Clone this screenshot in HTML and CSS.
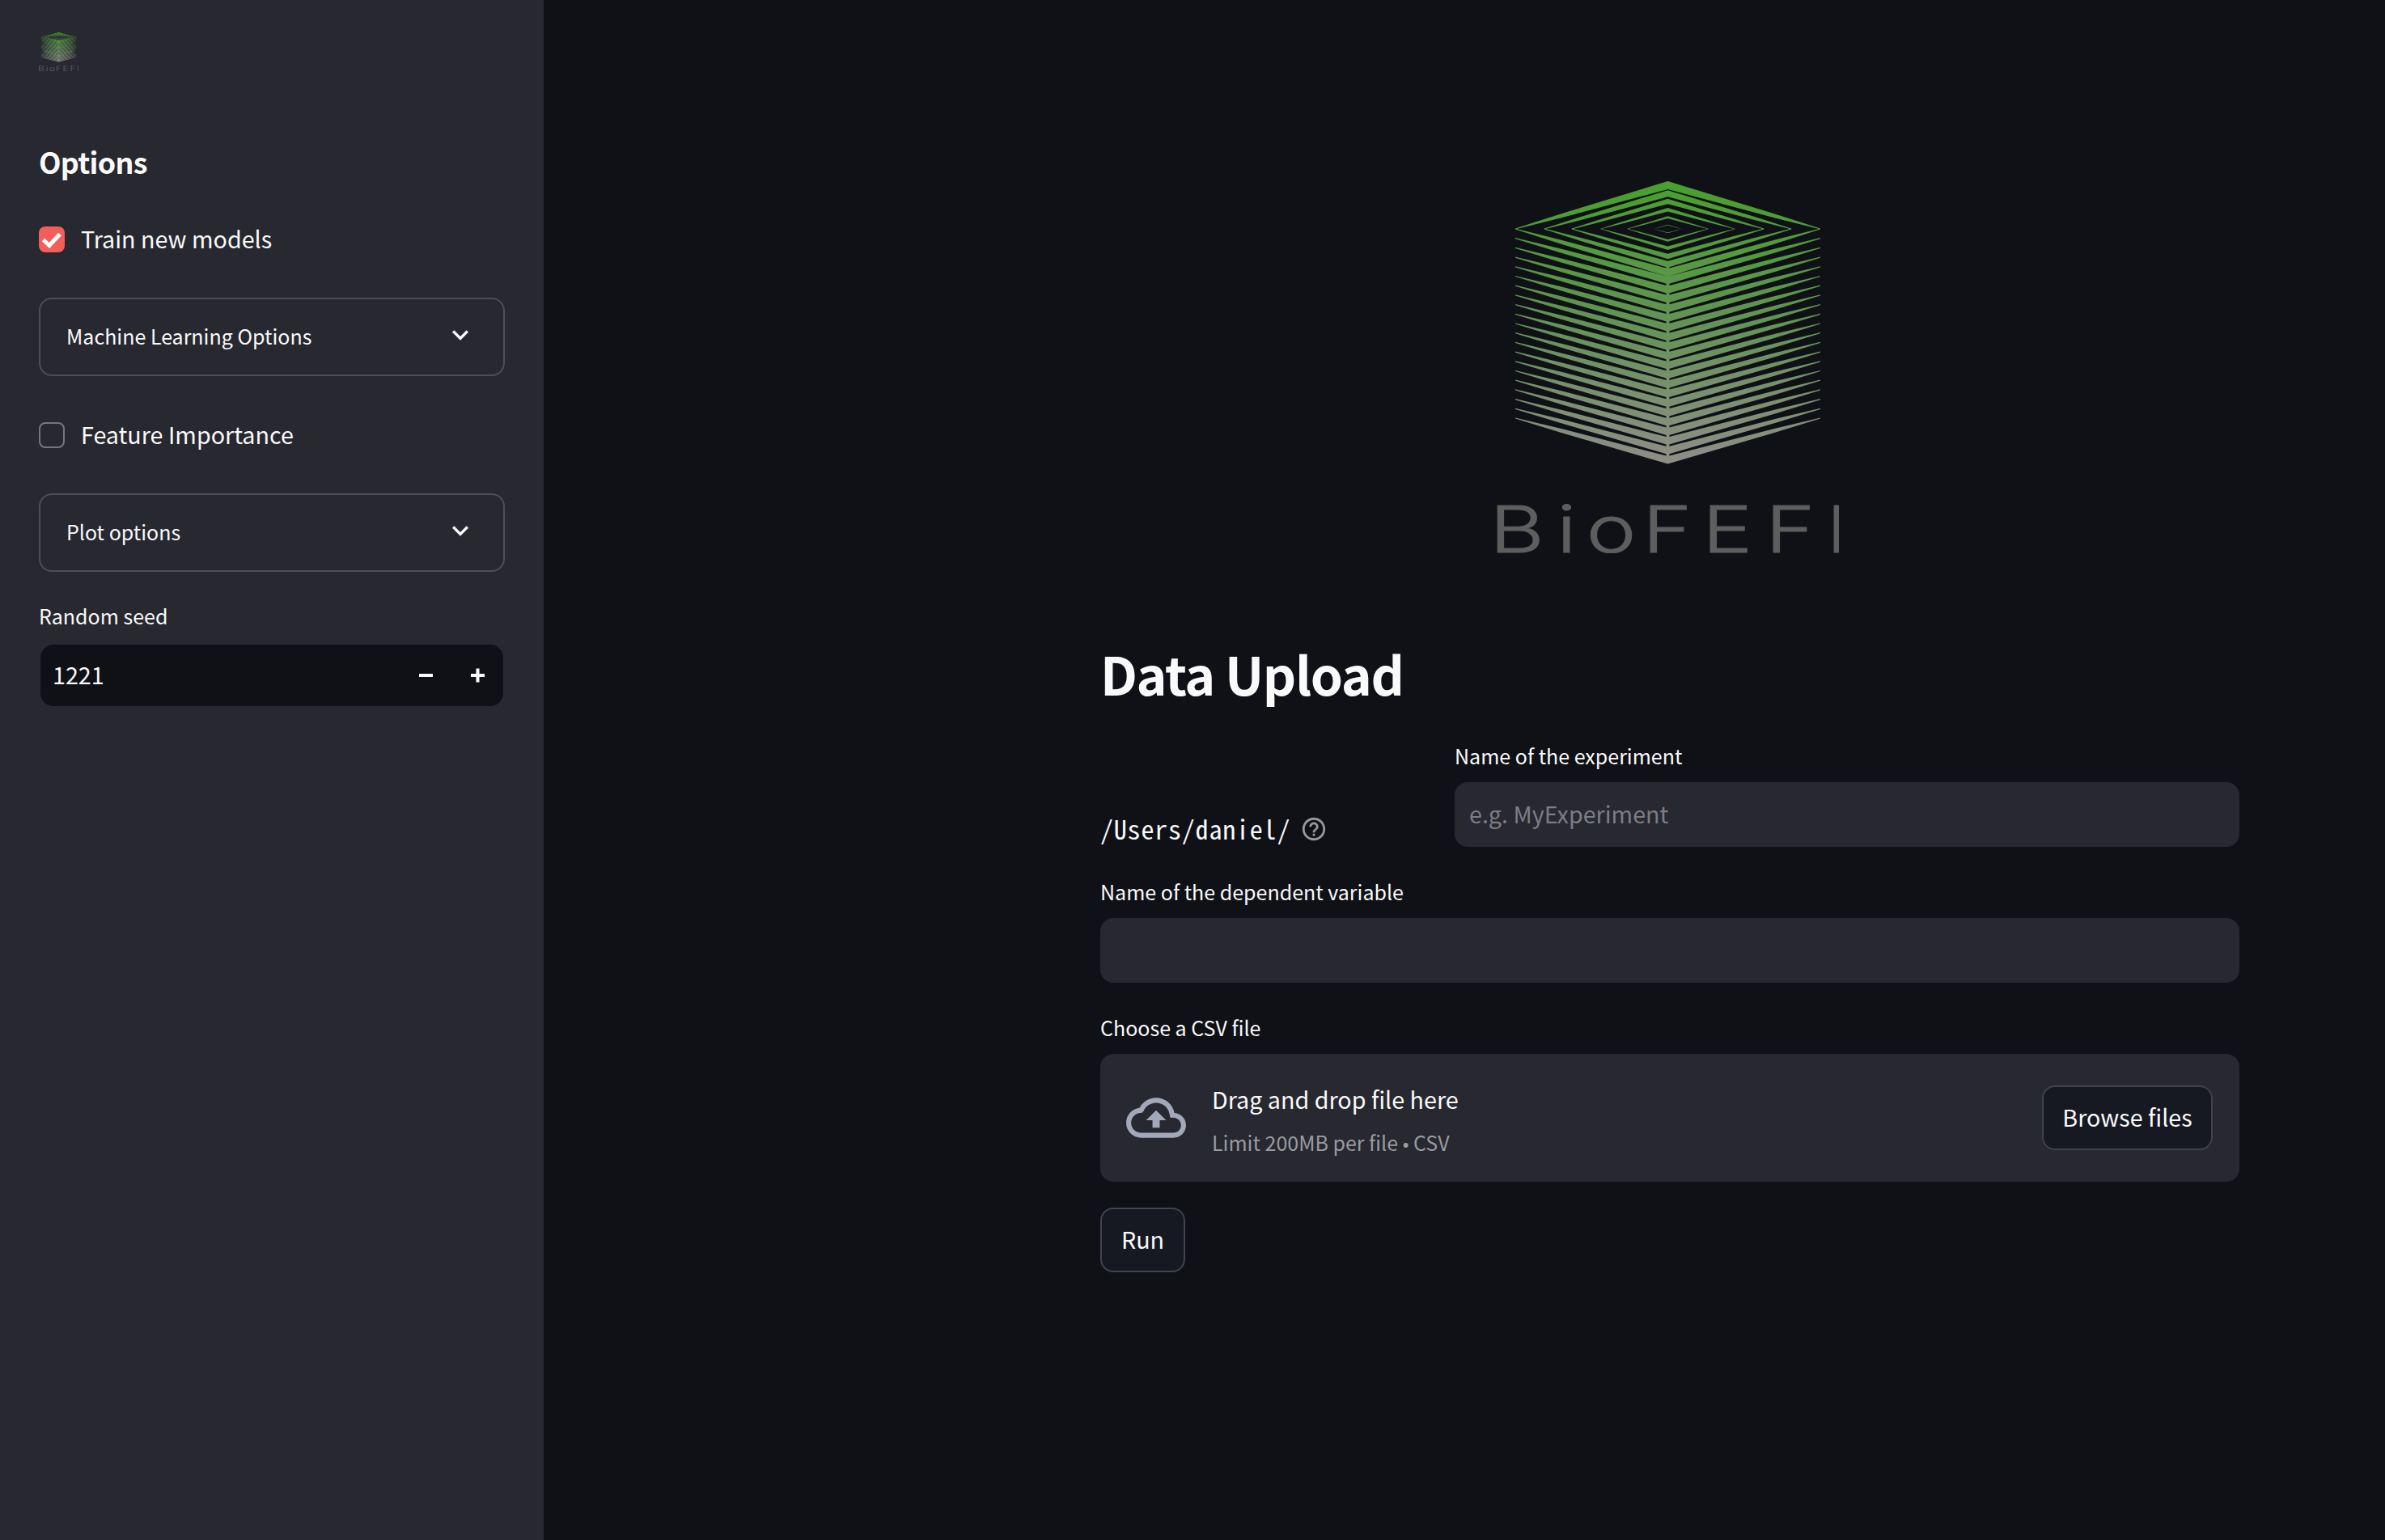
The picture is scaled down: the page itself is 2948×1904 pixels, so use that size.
FILE: index.html
```html
<!DOCTYPE html>
<html lang="en">
  <head>
    <meta charset="UTF-8" />
    <meta name="viewport" content="width=device-width, initial-scale=1.0" />
    <title>BioFEFI</title>
    <link rel="stylesheet" href="styles.css">
  </head>
  <body>
    <aside class="sidebar">
      <svg class="side-logo" viewBox="0 0 424 460" preserveAspectRatio="none"><use href="#logo-mark" /></svg>
      <h2 class="side-title">Options</h2>

      <div class="check check-first">
        <span class="check-box checked">
          <svg viewBox="0 0 32 32"><path d="M5.5 16.5l7.5 7L26 9.5" /></svg>
        </span>
        <span class="check-text">Train new models</span>
      </div>
      <div class="expander">
        <span class="expander-text">Machine Learning Options</span>
        <svg class="chevron" viewBox="0 0 24 24"><path d="M16.59 8.59 12 13.17 7.41 8.59 6 10l6 6 6-6z" /></svg>
      </div>

      <div class="check check-second">
        <span class="check-box"></span>
        <span class="check-text">Feature Importance</span>
      </div>
      <div class="expander">
        <span class="expander-text">Plot options</span>
        <svg class="chevron" viewBox="0 0 24 24"><path d="M16.59 8.59 12 13.17 7.41 8.59 6 10l6 6 6-6z" /></svg>
      </div>

      <div class="label seed-label">Random seed</div>
      <div class="number-input">
        <span class="number-value">1221</span>
        <svg class="step" viewBox="0 0 18 18"><path d="M0 9h17" /></svg>
        <svg class="step" viewBox="0 0 18 18"><path d="M0 9h17M8.5 .5v17" /></svg>
      </div>
    </aside>

    <main class="main">
      <svg class="main-logo" viewBox="0 0 424 460">
        <defs>
          <linearGradient id="cube-fade" gradientUnits="userSpaceOnUse" x1="0" y1="0" x2="0" y2="348">
            <stop offset="0" stop-color="#47a02c" />
            <stop offset="0.45" stop-color="#5f9450" />
            <stop offset="1" stop-color="#8f8d88" />
          </linearGradient>
          <g id="ring">
            <polygon points="24,58.4 80,40.5 212.5,0 345,40.5 401,58.4 401,59.6 345,45.5 212.5,10 80,45.5 24,59.6" />
            <polygon points="24,58.4 80,72.5 212.5,108 345,72.5 401,58.4 401,59.6 345,77.5 212.5,118 80,77.5 24,59.6" />
          </g>
          <polygon id="band" points="24,58.4 80,71.8 212.5,106 345,71.8 401,58.4 401,59.6 345,76.8 212.5,115.5 80,76.8 24,59.6" />
          <mask id="cube-lines" maskUnits="userSpaceOnUse" x="0" y="0" width="424" height="360">
            <g fill="#fff">
              <use href="#ring" />
              <use href="#ring" transform="translate(212.5 59) scale(.81) translate(-212.5 -59)" />
              <use href="#ring" transform="translate(212.5 59) scale(.63) translate(-212.5 -59)" />
              <use href="#ring" transform="translate(212.5 59) scale(.44) translate(-212.5 -59)" />
              <use href="#ring" transform="translate(212.5 59) scale(.265) translate(-212.5 -59)" />
              <use href="#ring" transform="translate(212.5 59) scale(.09) translate(-212.5 -59)" />
              <use href="#band" y="11.7" />
              <use href="#band" y="23.4" />
              <use href="#band" y="35.1" />
              <use href="#band" y="46.8" />
              <use href="#band" y="58.5" />
              <use href="#band" y="70.2" />
              <use href="#band" y="81.9" />
              <use href="#band" y="93.6" />
              <use href="#band" y="105.3" />
              <use href="#band" y="117" />
              <use href="#band" y="128.7" />
              <use href="#band" y="140.4" />
              <use href="#band" y="152.1" />
              <use href="#band" y="163.8" />
              <use href="#band" y="175.5" />
              <use href="#band" y="187.2" />
              <use href="#band" y="198.9" />
              <use href="#band" y="210.6" />
              <use href="#band" y="222.3" />
              <use href="#band" y="234" />
              <rect x="210.5" y="100" width="4" height="247" />
            </g>
          </mask>
          <symbol id="logo-mark" viewBox="0 0 424 460" preserveAspectRatio="none">
            <rect width="424" height="360" fill="url(#cube-fade)" mask="url(#cube-lines)" />
            <text class="logo-word" y="459" transform="scale(1.3 1)" x="-6 57.8 86 139.4 196.3 256.3 314">BioFEFI</text>
          </symbol>
        </defs>
        <use href="#logo-mark" />
      </svg>

      <h1 class="page-title">Data Upload</h1>

      <div class="first-row">
        <div class="path-cell">
          <span class="path">/Users/daniel/</span>
          <svg class="help" viewBox="0 0 24 24"><path d="M11 18h2v-2h-2v2zm1-16C6.48 2 2 6.48 2 12s4.48 10 10 10 10-4.48 10-10S17.52 2 12 2zm0 18c-4.41 0-8-3.59-8-8s3.59-8 8-8 8 3.59 8 8-3.59 8-8 8zm0-14c-2.21 0-4 1.79-4 4h2c0-1.1.9-2 2-2s2 .9 2 2c0 2-3 1.75-3 5h2c0-2.25 3-2.5 3-5 0-2.21-1.79-4-4-4z" /></svg>
        </div>
        <div>
          <div class="label">Name of the experiment</div>
          <div class="text-input placeholder">e.g. MyExperiment</div>
        </div>
      </div>

      <div class="field">
        <div class="label">Name of the dependent variable</div>
        <div class="text-input"></div>
      </div>

      <div class="field">
        <div class="label">Choose a CSV file</div>
        <div class="dropzone">
          <svg class="cloud" viewBox="0 0 24 24"><path d="M19.35 10.04C18.67 6.59 15.64 4 12 4 9.11 4 6.6 5.64 5.35 8.04 2.34 8.36 0 10.91 0 14c0 3.31 2.69 6 6 6h13c2.76 0 5-2.24 5-5 0-2.64-2.05-4.78-4.65-4.96zM19 18H6c-2.21 0-4-1.79-4-4 0-2.05 1.53-3.76 3.56-3.97l1.07-.11.5-.95C8.08 7.14 9.94 6 12 6c2.62 0 4.88 1.86 5.39 4.43l.3 1.5 1.53.11c1.56.1 2.78 1.41 2.78 2.96 0 1.65-1.35 3-3 3zM8 13h2.55v3h2.9v-3H16l-4-4z" /></svg>
          <div class="drop-text">
            <div class="drop-title">Drag and drop file here</div>
            <div class="drop-limit">Limit 200MB per file <span class="bullet">•</span> CSV</div>
          </div>
          <button class="btn browse">Browse files</button>
        </div>
      </div>

      <button class="btn run">Run</button>
    </main>
  </body>
</html>
```

FILE: styles.css
```css
body,
html {
  margin: 0;
  padding: 0;
  height: 100%;
}

body {
  display: flex;
  min-height: 1904px;
  overflow: hidden;
  background-color: #0f1117;
  color: #fafafa;
  font-family: "Noto Sans CJK SC", "Noto Sans", sans-serif;
  font-size: 28.7px;
}

/* sidebar */
.sidebar {
  width: 672px;
  flex: none;
  box-sizing: border-box;
  padding: 40px 48px 0;
  background-color: #272830;
}

.side-logo {
  display: block;
  width: 49px;
  height: 48px;
}

.side-title {
  margin: 84px 0 0;
  font-size: 35.8px;
  letter-spacing: -0.7px;
  line-height: 54px;
  padding-bottom: 2px;
  font-weight: 700;
}

.check {
  display: flex;
  align-items: center;
  gap: 20px;
  height: 32px;
}

.check-text {
  padding-bottom: 3px;
}

.check-first {
  margin-top: 52px;
}

.check-second {
  margin-top: 57px;
}

.check-box {
  width: 32px;
  height: 32px;
  box-sizing: border-box;
  border: 2px solid #76777d;
  border-radius: 8px;
}

.check-box.checked {
  border: 0;
  background-color: #f25e58;
}

.check-box svg {
  display: block;
}

.check-box path {
  fill: none;
  stroke: #fff;
  stroke-width: 5;
}

.expander {
  display: flex;
  align-items: center;
  justify-content: space-between;
  height: 97px;
  box-sizing: border-box;
  margin-top: 56px;
  padding: 0 32px;
  border: 2px solid #4d4e57;
  border-radius: 16px;
  font-size: 25px;
}

.expander-text {
  padding-bottom: 4px;
}

.chevron {
  width: 40px;
  height: 40px;
  margin-top: -6px;
  margin-right: 1px;
  fill: #fafafa;
}

.label {
  height: 40px;
  line-height: 38px;
  font-size: 25px;
  margin-bottom: 12px;
}

.seed-label {
  margin-top: 36px;
  margin-bottom: 14px;
  line-height: 37px;
}

.number-input {
  display: flex;
  align-items: center;
  height: 76px;
  margin: 0 2px;
  padding: 0 22px 0 15px;
  border-radius: 16px;
  background-color: #0f1117;
}

.number-value {
  flex: 1;
  padding-bottom: 3px;
}

.step {
  width: 18px;
  height: 18px;
  margin-left: 46px;
  fill: none;
  stroke: #fafafa;
  stroke-width: 4;
}

/* main column */
.main {
  flex: 1;
  min-width: 0;
  display: flex;
  flex-direction: column;
  padding: 224px 180px 0 688px;
}

.main-logo {
  display: block;
  width: 424px;
  height: 460px;
  margin-left: 489px;
  flex: none;
}

.logo-word {
  font-family: Inter, "Liberation Sans", sans-serif;
  font-size: 80px;
  font-weight: 300;
  fill: #5e5e5e;
  stroke: #5e5e5e;
  stroke-width: 1;
}

.page-title {
  margin: 112px 0 0;
  font-size: 64.4px;
  letter-spacing: -1.4px;
  line-height: 72px;
  padding-bottom: 16px;
  font-weight: 700;
}

.first-row {
  display: grid;
  grid-template-columns: 406px 1fr;
  gap: 32px;
  margin-top: 31px;
}

.path-cell {
  display: flex;
  align-items: center;
  align-self: end;
  gap: 12px;
  height: 44px;
}

.path {
  padding-bottom: 3px;
  font-family: "Noto Sans Mono CJK SC", "DejaVu Sans Mono", monospace;
  font-size: 32px;
  letter-spacing: 0.8px;
}

.help {
  width: 34px;
  height: 34px;
  fill: #97979c;
}

.text-input {
  height: 80px;
  box-sizing: border-box;
  padding: 0 18px;
  border-radius: 16px;
  background-color: #272830;
  line-height: 78px;
}

.placeholder {
  color: #7c7d84;
}

.field {
  margin-top: 36px;
}

.dropzone {
  display: flex;
  align-items: center;
  height: 158px;
  box-sizing: border-box;
  padding: 0 33px 0 32px;
  border-radius: 16px;
  background-color: #272830;
}

.cloud {
  width: 74px;
  height: 74px;
  flex: none;
  fill: #a3a8b8;
}

.drop-text {
  flex: 1;
  margin-left: 32px;
  padding-top: 11px;
}

.drop-title {
  line-height: 48px;
}

.drop-limit {
  margin-top: 5px;
  line-height: 48px;
  font-size: 25px;
  color: #9a9ba1;
}

.bullet {
  font-family: "Liberation Sans", sans-serif;
  font-size: 22px;
}

.btn {
  height: 80px;
  box-sizing: border-box;
  padding: 0 0 3px;
  border: 2px solid #41434c;
  border-radius: 16px;
  background-color: #161922;
  color: #fafafa;
  font-family: inherit;
  font-size: 28.7px;
}

.browse {
  width: 211px;
}

.run {
  align-self: flex-start;
  width: 105px;
  margin-top: 32px;
}
```
